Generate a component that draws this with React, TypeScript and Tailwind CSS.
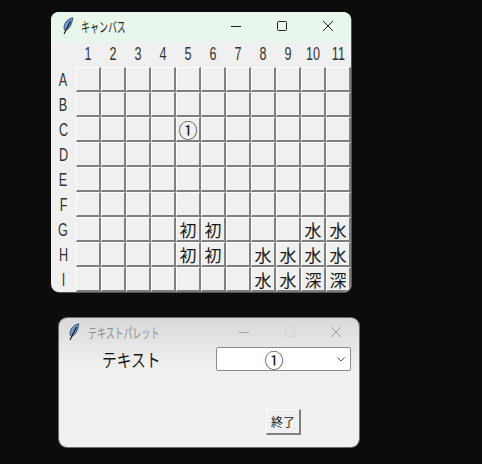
const FONT = "font-['Noto_Sans_CJK_JP','Liberation_Sans',sans-serif]";

const cols = ["1", "2", "3", "4", "5", "6", "7", "8", "9", "10", "11"];
const rows = ["A", "B", "C", "D", "E", "F", "G", "H", "I"];
const marks: Record<string, string> = {
  "C5": "①",
  "G5": "初", "G6": "初", "G10": "水", "G11": "水",
  "H5": "初", "H6": "初", "H8": "水", "H9": "水", "H10": "水", "H11": "水",
  "I8": "水", "I9": "水", "I10": "深", "I11": "深",
};

function Feather() {
  return (
    <svg width="12" height="18" viewBox="0 0 12 18" className="shrink-0">
      <path d="M10.8 0.8 C6.5 1.5 3 5 2.2 9 C1.8 11 2.3 12.8 3.2 13.4 C7 12.5 9.8 8 10.8 0.8 Z" fill="#6f9bd0" stroke="#1d3557" strokeWidth="0.8" />
      <path d="M8.5 4 L2 17" stroke="#111" strokeWidth="1.1" fill="none" />
    </svg>
  );
}

function TitleButtons({ dim }: { dim?: boolean }) {
  const stroke = dim ? "#a3a3a3" : "#222";
  const box = dim ? "#d4d4d4" : "#222";
  return (
    <div className="flex items-center">
      <div className="w-[46px] flex justify-center">
        <svg width="12" height="12" viewBox="0 0 12 12"><path d="M1 6.5H11" stroke={stroke} strokeWidth="1" /></svg>
      </div>
      <div className="w-[46px] flex justify-center">
        <svg width="12" height="12" viewBox="0 0 12 12"><rect x="1.5" y="1.5" width="9" height="9" rx="1" fill="none" stroke={box} strokeWidth="1" /></svg>
      </div>
      <div className="w-[46px] flex justify-center">
        <svg width="12" height="12" viewBox="0 0 12 12"><path d="M1 1L11 11M11 1L1 11" stroke={stroke} strokeWidth="1" /></svg>
      </div>
    </div>
  );
}

function Cell({ text }: { text?: string }) {
  const circled = text === "①";
  return (
    <div className={`w-[25px] h-[25px] border border-t-white border-l-white border-r-[2px] border-b-[2px] border-r-[#7f7f7f] border-b-[#7f7f7f] bg-[#f0f0f0] flex items-center justify-center leading-none text-[#1a1a1a] ${circled ? "text-[19px]" : "text-[17px]"}`}>
      {text}
    </div>
  );
}

function Label({ text }: { text: string }) {
  return (
    <span className="inline-block font-['Liberation_Sans',sans-serif] text-[18px] leading-none text-[#333] scale-x-[0.7]">{text}</span>
  );
}

export default function App() {
  return (
    <div className={`relative w-[482px] h-[464px] bg-[#0c0c0c] overflow-hidden ${FONT}`}>
      {/* Canvas window */}
      <div className="absolute left-[51px] top-[12px] w-[300px] h-[280px] rounded-lg overflow-hidden bg-[#f0f0f0] shadow-[1px_1px_0_0_#555]">
        <div className="h-[30px] bg-[#e8f6ec] flex items-center justify-between pl-[11px] pb-[2px]">
          <div className="flex items-center gap-[7px]">
            <Feather />
            <span className="inline-block origin-left text-[14px] leading-none text-[#222] scale-x-[0.64]">キャンバス</span>
          </div>
          <TitleButtons />
        </div>
        <div className="flex h-[25px] pl-[25px] pb-[2px]">
          {cols.map((c) => (
            <div key={c} className="w-[25px] flex items-center justify-center">
              <Label text={c} />
            </div>
          ))}
        </div>
        {rows.map((r) => (
          <div key={r} className="flex h-[25px]">
            <div className="w-[25px] flex items-center justify-center">
              <Label text={r} />
            </div>
            {cols.map((c) => (
              <Cell key={c} text={marks[r + c]} />
            ))}
          </div>
        ))}
      </div>

      {/* Palette window */}
      <div className="absolute left-[59px] top-[318px] w-[300px] h-[129px] rounded-lg overflow-hidden bg-[linear-gradient(to_bottom,#d8d8d8_0px,#f0f0f0_48px)] shadow-[0_0_0_1px_#6a6a6a]">
        <div className="h-[28px] flex items-center justify-between pl-[9px]">
          <div className="flex items-center gap-[8px]">
            <Feather />
            <span className="inline-block origin-left text-[14px] leading-none text-[#8f8f8f] scale-x-[0.64]">テキストパレット</span>
          </div>
          <TitleButtons dim />
        </div>
        <div className="flex items-center h-[26px] pl-[43px] pr-2">
          <span className="inline-block origin-left text-[18px] leading-none text-[#1a1a1a] scale-x-[0.82]">テキスト</span>
          <div className="ml-auto w-[135px] h-[24px] rounded-[2px] border border-[#8a8a8a] bg-white flex items-center pl-[6px] pr-[5px]">
            <span className="flex-1 text-center text-[19px] leading-none text-[#1a1a1a] pr-[12px]">①</span>
            <svg width="8" height="5" viewBox="0 0 8 5"><path d="M0.5 0.5L4 4L7.5 0.5" fill="none" stroke="#555" strokeWidth="1" /></svg>
          </div>
        </div>
        <div className="flex justify-end pr-[58px] pt-[37px]">
          <div className="w-[35px] h-[26px] flex items-center justify-center border border-t-white border-l-white border-r-[2px] border-b-[2px] border-r-[#7f7f7f] border-b-[#7f7f7f] bg-[#f0f0f0] text-[12px] leading-none text-[#1a1a1a]">
            終了
          </div>
        </div>
      </div>
    </div>
  );
}
